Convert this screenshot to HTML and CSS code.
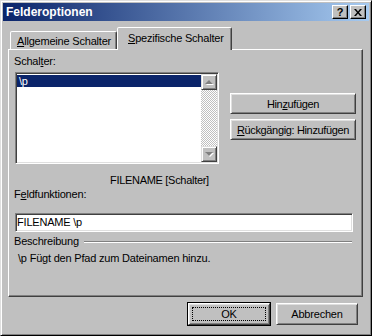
FILE: index.html
```html
<!DOCTYPE html>
<html lang="de">
<head>
    <meta charset="UTF-8">
    <title>Felderoptionen</title>
    <link rel="stylesheet" href="styles.css">
</head>
<body>
    <div class="window">
        <!-- Titelleiste -->
        <div class="titlebar">
            <span class="title">Felderoptionen</span>
            <div class="caption-buttons">
                <span class="cap-btn">?</span>
                <span class="cap-btn close">
                    <svg width="8" height="7" viewBox="0 0 8 7"><path d="M0 0h2l2 2.5L6 0h2L5 3.5 8 7H6L4 4.5 2 7H0l3-3.5z" fill="#000"/></svg>
                </span>
            </div>
        </div>

        <div class="dialog">
            <!-- Registerkarten -->
            <div class="tabs">
                <div class="tab"><u>A</u>llgemeine Schalter</div>
                <div class="tab active"><u>S</u>pezifische Schalter</div>
            </div>

            <div class="panel">
                <div class="label">Schal<u>t</u>er:</div>
                <div class="switch-row">
                    <div class="listbox">
                        <div class="items">
                            <div class="item selected">\p</div>
                        </div>
                        <div class="scrollbar">
                            <div class="sb-btn"><span class="arrow up"></span></div>
                            <div class="sb-track"></div>
                            <div class="sb-btn"><span class="arrow down"></span></div>
                        </div>
                    </div>
                    <div class="side-buttons">
                        <div class="btn wide">Hin<u>z</u>ufügen</div>
                        <div class="btn wide"><u>R</u>ückgängig: Hinzufügen</div>
                    </div>
                </div>

                <div class="code-row">
                    <div class="label">F<u>e</u>ldfunktionen:</div>
                    <div class="syntax">FILENAME [Schalter]</div>
                </div>

                <div class="textbox">FILENAME \p</div>

                <div class="group">
                    <span class="group-title">Beschreibung</span>
                    <span class="group-line"></span>
                </div>
                <div class="desc">\p Fügt den Pfad zum Dateinamen hinzu.</div>
            </div>

            <div class="footer">
                <div class="btn default"><span class="focus">OK</span></div>
                <div class="btn">Abbrechen</div>
            </div>
        </div>
    </div>
</body>
</html>
```
FILE: styles.css
```css
body {
    margin: 0;
    background: #c0c0c0;
    font-family: "Liberation Sans", Arial, sans-serif;
    font-size: 11px;
    letter-spacing: -0.2px;
    color: #000;
}
u {
    text-decoration: underline;
    text-underline-offset: 1px;
}
.window {
    width: 372px;
    height: 336px;
    box-sizing: border-box;
    background: #c0c0c0;
    border: 1px solid;
    border-color: #dfdfdf #000 #000 #dfdfdf;
    box-shadow: inset 1px 1px #fff, inset -1px -1px #808080;
    padding: 2px;
}
.titlebar {
    height: 18px;
    display: flex;
    align-items: center;
    justify-content: space-between;
    background: linear-gradient(to right, #0a246a, #a6caf0);
    padding: 0 3px 0 3px;
}
.title {
    color: #fff;
    font-weight: bold;
    font-size: 12px;
    letter-spacing: 0;
}
.caption-buttons {
    display: flex;
    gap: 2px;
}
.cap-btn {
    width: 16px;
    height: 14px;
    box-sizing: border-box;
    display: flex;
    align-items: center;
    justify-content: center;
    background: #c0c0c0;
    border: 1px solid;
    border-color: #fff #000 #000 #fff;
    box-shadow: inset -1px -1px #808080;
    font-weight: bold;
    font-size: 11px;
    line-height: 1;
}
.dialog {
    padding: 0 6px 0 5px;
}
.tabs {
    display: flex;
    align-items: flex-end;
    height: 22px;
    margin-top: 6px;
    padding-left: 2px;
    position: relative;
    z-index: 1;
}
.tab {
    height: 18px;
    box-sizing: border-box;
    padding: 3px 0 0 6px;
    white-space: nowrap;
    border: 1px solid;
    border-bottom: none;
    border-color: #fff #404040 transparent #fff;
    box-shadow: inset -1px 0 #808080;
    border-radius: 2px 2px 0 0;
    background: #c0c0c0;
    width: 107px;
}
.tab.active {
    height: 23px;
    width: 115px;
    margin-bottom: -1px;
    padding: 4px 0 0 10px;
}
.panel {
    height: 248px;
    box-sizing: border-box;
    border: 1px solid;
    border-color: #fff #404040 #404040 #fff;
    box-shadow: inset -1px -1px #808080;
    padding: 5px 0 0 6px;
}
.label {
    line-height: 13px;
    margin-left: -1px;
    white-space: nowrap;
}
.switch-row {
    display: flex;
    margin-top: 4px;
}
.listbox {
    width: 204px;
    height: 92px;
    box-sizing: border-box;
    display: flex;
    background: #fff;
    border: 1px solid;
    border-color: #808080 #fff #fff #808080;
    box-shadow: inset 1px 1px #404040, inset -1px -1px #dfdfdf;
    padding: 1px;
}
.items {
    flex: 1;
    padding-top: 1px;
}
.item {
    height: 12px;
    line-height: 12px;
    padding-left: 2px;
}
.item.selected {
    background: #0a246a;
    color: #fff;
}
.scrollbar {
    width: 16px;
    display: flex;
    flex-direction: column;
}
.sb-btn {
    height: 16px;
    box-sizing: border-box;
    display: flex;
    align-items: center;
    justify-content: center;
    background: #c0c0c0;
    border: 1px solid;
    border-color: #dfdfdf #404040 #404040 #dfdfdf;
    box-shadow: inset 1px 1px #fff, inset -1px -1px #808080;
}
.sb-track {
    flex: 1;
    background: repeating-conic-gradient(#c0c0c0 0 25%, #fff 0 50%) 0 0 / 2px 2px;
}
.arrow {
    width: 0;
    height: 0;
    border-left: 4px solid transparent;
    border-right: 4px solid transparent;
    filter: drop-shadow(1px 1px 0 #fff);
}
.arrow.up {
    border-bottom: 4px solid #808080;
}
.arrow.down {
    border-top: 4px solid #808080;
}
.side-buttons {
    display: flex;
    flex-direction: column;
    gap: 5px;
    margin: 21px 0 0 11px;
}
.btn {
    box-sizing: border-box;
    width: 82px;
    height: 22px;
    display: flex;
    align-items: center;
    justify-content: center;
    white-space: nowrap;
    background: #c0c0c0;
    border: 1px solid;
    border-color: #fff #404040 #404040 #fff;
    box-shadow: inset 1px 1px #dfdfdf, inset -1px -1px #808080;
}
.btn.wide {
    width: 126px;
    height: 21px;
    letter-spacing: -0.35px;
}
.code-row {
    display: flex;
    height: 39px;
    margin-top: 10px;
}
.code-row .label {
    width: 96px;
    flex: none;
    align-self: flex-end;
    margin-bottom: 12px;
}
.syntax {
    line-height: 13px;
    letter-spacing: -0.3px;
}
.textbox {
    width: 338px;
    height: 19px;
    box-sizing: border-box;
    padding: 2px 2px 2px 1px;
    line-height: 13px;
    background: #fff;
    border: 1px solid;
    border-color: #808080 #fff #fff #808080;
    box-shadow: inset 1px 1px #404040, inset -1px -1px #dfdfdf;
}
.group {
    display: flex;
    align-items: center;
    width: 338px;
    margin-top: 3px;
    margin-left: -1px;
    line-height: 13px;
}
.group-line {
    flex: 1;
    height: 0;
    margin-left: 5px;
    border-top: 1px solid #808080;
    border-bottom: 1px solid #fff;
}
.desc {
    margin: 4px 0 0 3px;
    line-height: 13px;
}
.footer {
    display: flex;
    justify-content: flex-end;
    gap: 6px;
    margin-top: 6px;
    padding-right: 5px;
}
.btn.default {
    outline: 1px solid #000;
    outline-offset: 0;
}
.focus {
    flex: 1;
    align-self: stretch;
    margin: 3px;
    display: flex;
    align-items: center;
    justify-content: center;
    border: 1px dotted #000;
}
```
